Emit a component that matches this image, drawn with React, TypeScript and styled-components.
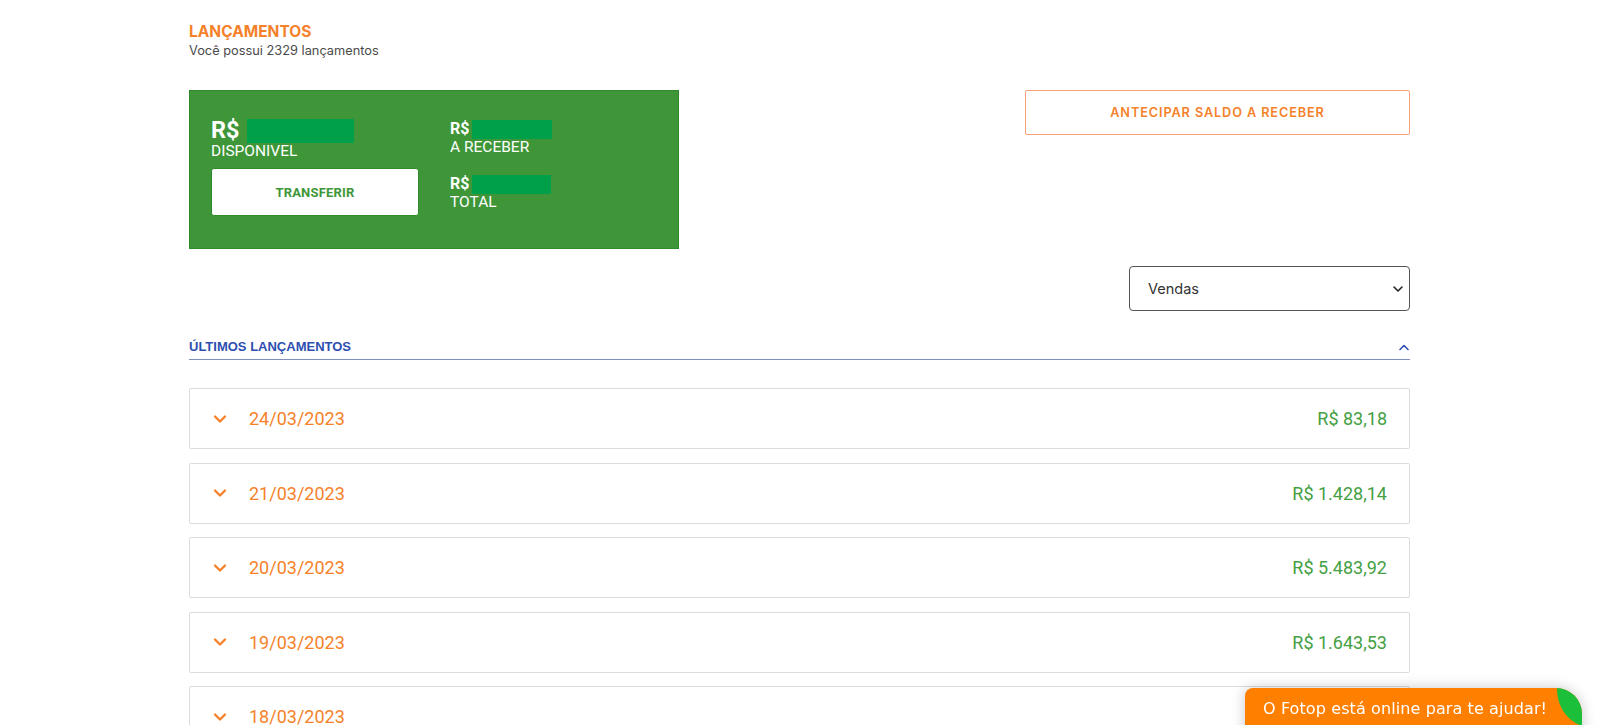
import React from "react";
import styled, { createGlobalStyle } from "styled-components";

const Global = createGlobalStyle`
  html, body { margin: 0; padding: 0; background: #fff; }
  body { font-family: Inter, "Noto Sans", sans-serif; overflow: hidden; }
  * { box-sizing: border-box; }
`;

const Page = styled.div`
  width: 1221px;
  margin-left: 189px;
  padding-top: 23px;
  display: flex;
  flex-direction: column;
`;

const Title = styled.h1`
  margin: 0;
  font-size: 15.5px;
  font-weight: 700;
  color: #f5822a;
  line-height: 18px;
`;

const Subtitle = styled.p`
  margin: 2px 0 0;
  font-size: 12.8px;
  color: #4a4a4a;
  line-height: 16px;
`;

const TopRow = styled.div`
  display: flex;
  justify-content: space-between;
  align-items: flex-start;
  margin-top: 31px;
`;

const BalanceCard = styled.div`
  width: 490px;
  height: 159px;
  background: #3e9638;
  border: 1px solid #2f8a2a;
  padding: 28px 20px 0 21px;
  display: grid;
  grid-template-columns: 239px 1fr;
  color: #fff;
  font-family: Roboto, "Liberation Sans", sans-serif;
`;

const Column = styled.div`
  display: flex;
  flex-direction: column;
`;

const AmountLine = styled.div<{ $big?: boolean }>`
  display: flex;
  align-items: center;
  gap: ${(p) => (p.$big ? "7px" : "3px")};
  height: ${(p) => (p.$big ? "24px" : "20px")};
  font-weight: 700;
  font-size: ${(p) => (p.$big ? "23.5px" : "16px")};
  line-height: 1;
`;

const Redacted = styled.span<{ $w: number; $h: number }>`
  display: inline-block;
  width: ${(p) => p.$w}px;
  height: ${(p) => p.$h}px;
  background: #00a04b;
`;

const Label = styled.div<{ $mb?: number }>`
  font-size: 15.5px;
  line-height: 16px;
  margin-bottom: ${(p) => p.$mb ?? 0}px;
`;

const TransferButton = styled.button`
  width: 208px;
  height: 48px;
  margin-top: 9px;
  background: #fff;
  border: 1px solid #2f8a2a;
  border-radius: 3px;
  color: #3e9638;
  font-family: Roboto, "Liberation Sans", sans-serif;
  font-size: 13px;
  font-weight: 700;
  letter-spacing: 0.2px;
  cursor: pointer;
`;

const AdvanceButton = styled.button`
  width: 385px;
  height: 45px;
  background: #fff;
  border: 1px solid #f7a07a;
  border-radius: 2px;
  color: #f5822a;
  font-family: Inter, sans-serif;
  font-size: 12.7px;
  font-weight: 600;
  letter-spacing: 0.9px;
  cursor: pointer;
`;

const FilterRow = styled.div`
  display: flex;
  justify-content: flex-end;
  margin-top: 17px;
`;

const SelectBox = styled.div`
  position: relative;
  width: 281px;
  height: 45px;
  border: 1px solid #555;
  border-radius: 4px;
  display: flex;
  align-items: center;
  padding-left: 18px;
  font-size: 14.5px;
  color: #333;
  svg { position: absolute; right: 5px; top: 18px; }
`;

const SectionHeader = styled.div`
  margin-top: 27px;
  display: flex;
  justify-content: space-between;
  align-items: center;
  padding-bottom: 4px;
  border-bottom: 1px solid #7f8fb8;
  height: 22px;
`;

const SectionTitle = styled.span`
  font-family: "Liberation Sans", sans-serif;
  font-size: 13px;
  font-weight: 700;
  color: #2e4fb0;
`;

const List = styled.div`
  margin-top: 28px;
  display: flex;
  flex-direction: column;
  gap: 13.5px;
`;

const Row = styled.div`
  height: 61px;
  border: 1px solid #dcdcdc;
  border-radius: 2px;
  display: flex;
  align-items: center;
  padding: 0 22px 0 23px;
  font-family: Roboto, "Liberation Sans", sans-serif;
  font-size: 18px;
`;

const DateText = styled.span`
  margin-left: 22px;
  color: #f5822a;
  flex: 1;
`;

const Amount = styled.span`
  color: #44a043;
`;

const ChatWidget = styled.div`
  position: fixed;
  left: 1245px;
  top: 688px;
  width: 337px;
  height: 50px;
  background: #ff7f00;
  border-radius: 8px 26px 0 0;
  overflow: hidden;
  box-shadow: 0 0 14px rgba(0, 0, 0, 0.22);
  padding: 11px 0 0 18px;
  color: #fff;
  font-family: "DejaVu Sans", Verdana, sans-serif;
  font-size: 16px;
  letter-spacing: 0.1px;
  svg { position: absolute; right: 0; top: 0; }
`;

const Chevron = ({ color, up }: { color: string; up?: boolean }) => (
  <svg width="14" height="10" viewBox="0 0 14 10" fill="none">
    <path
      d={up ? "M2 8 L7 3 L12 8" : "M2 2.5 L7 7.5 L12 2.5"}
      stroke={color}
      strokeWidth="2.4"
      strokeLinecap="round"
      strokeLinejoin="round"
    />
  </svg>
);

const SmallChevron = ({ color, up }: { color: string; up?: boolean }) => (
  <svg width="12" height="8" viewBox="0 0 12 8" fill="none">
    <path
      d={up ? "M2 6.5 L6 2.5 L10 6.5" : "M2 2 L6 6 L10 2"}
      stroke={color}
      strokeWidth="1.6"
      strokeLinecap="round"
      strokeLinejoin="round"
    />
  </svg>
);

const Leaf = () => (
  <svg width="26" height="40" viewBox="0 0 26 40">
    <path d="M1 0 C 1 18, 10 32, 26 38 L26 0 Z" fill="#1cbf3a" />
  </svg>
);

const entries = [
  { date: "24/03/2023", amount: "R$ 83,18" },
  { date: "21/03/2023", amount: "R$ 1.428,14" },
  { date: "20/03/2023", amount: "R$ 5.483,92" },
  { date: "19/03/2023", amount: "R$ 1.643,53" },
  { date: "18/03/2023", amount: "R$ 2.110,47" },
];

export default function App() {
  return (
    <>
      <Global />
      <Page>
        <Title>LANÇAMENTOS</Title>
        <Subtitle>Você possui 2329 lançamentos</Subtitle>
        <TopRow>
          <BalanceCard>
            <Column>
              <AmountLine $big>
                R$ <Redacted $w={107} $h={24} />
              </AmountLine>
              <Label>DISPONIVEL</Label>
              <TransferButton>TRANSFERIR</TransferButton>
            </Column>
            <Column>
              <AmountLine>
                R$ <Redacted $w={80} $h={19} />
              </AmountLine>
              <Label $mb={19}>A RECEBER</Label>
              <AmountLine>
                R$ <Redacted $w={79} $h={19} />
              </AmountLine>
              <Label>TOTAL</Label>
            </Column>
          </BalanceCard>
          <AdvanceButton>ANTECIPAR SALDO A RECEBER</AdvanceButton>
        </TopRow>
        <FilterRow>
          <SelectBox>
            Vendas
            <SmallChevron color="#222" />
          </SelectBox>
        </FilterRow>
        <SectionHeader>
          <SectionTitle>ÚLTIMOS LANÇAMENTOS</SectionTitle>
          <SmallChevron color="#2e4fb0" up />
        </SectionHeader>
        <List>
          {entries.map((e) => (
            <Row key={e.date}>
              <Chevron color="#f5822a" />
              <DateText>{e.date}</DateText>
              <Amount>{e.amount}</Amount>
            </Row>
          ))}
        </List>
      </Page>
      <ChatWidget>
        O Fotop está online para te ajudar!
        <Leaf />
      </ChatWidget>
    </>
  );
}
